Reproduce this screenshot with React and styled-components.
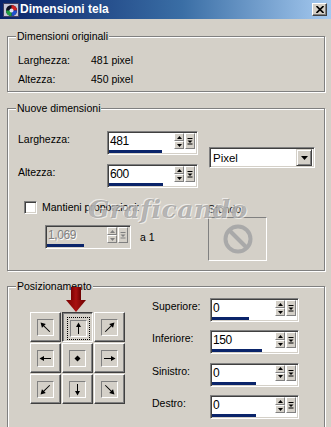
import React from 'react';
import styled, { createGlobalStyle } from 'styled-components';

const Global = createGlobalStyle`
  html, body { margin: 0; padding: 0; background: #d4d0c8; }
  body {
    font-family: "Liberation Sans", Arial, sans-serif;
    font-size: 10.5px;
    color: #000;
  }
`;

const Window = styled.div`
  position: relative;
  width: 331px;
  height: 427px;
  overflow: hidden;
  background: #d4d0c8;
`;

const TitleBar = styled.div`
  height: 19px;
  display: flex;
  align-items: center;
  padding: 0 4px 0 3px;
  background: linear-gradient(to right, #0a246a 0%, #3a6ea5 55%, #a6caf0 100%);
`;

const TitleText = styled.span`
  margin-left: 1px;
  color: #fff;
  font-weight: bold;
  font-size: 12px;
  line-height: 19px;
`;

const CloseButton = styled.div`
  margin-left: auto;
  width: 15px;
  height: 13px;
  box-sizing: border-box;
  background: #d4d0c8;
  border: 1px solid;
  border-color: #fff #404040 #404040 #fff;
  box-shadow: inset -1px -1px 0 #808080;
  display: flex;
  align-items: center;
  justify-content: center;
`;

const Body = styled.div`
  padding: 11px 0 0 7px;
`;

const Group = styled.fieldset`
  width: 318px;
  box-sizing: border-box;
  margin: ${p => p.$mt || 0}px 0 0;
  padding: 0;
  min-width: 0;
  border: 1px solid #808080;
  box-shadow: inset 1px 1px 0 #fff, 1px 1px 0 #fff;
`;

const Legend = styled.legend`
  margin-left: 8px;
  padding: 0 1px;
  line-height: 12px;
  background: #d4d0c8;
`;

const InfoContent = styled.div`
  padding: 8.5px 0 2.5px 10px;
`;

const InfoRow = styled.div`
  display: grid;
  grid-template-columns: 73px auto;
  line-height: 19px;
`;

const NewContent = styled.div`
  padding: 17px 0 9px 10px;
`;

const TopArea = styled.div`
  display: flex;
  align-items: center;
`;

const SizeGrid = styled.div`
  display: grid;
  grid-template-columns: 89px 91px;
  row-gap: 9px;
`;

const FieldLabel = styled.span`
  align-self: start;
  padding-top: 2px;
  line-height: 13px;
`;

const LowerArea = styled.div`
  display: flex;
  margin-top: 13px;
`;

const LeftCol = styled.div`
  width: 190px;
`;

const CheckRow = styled.div`
  display: flex;
  align-items: center;
  gap: 5px;
  padding-left: 6px;
  height: 13px;
  line-height: 13px;
`;

const CheckBox = styled.div`
  width: 13px;
  height: 13px;
  box-sizing: border-box;
  background: #fff;
  border: 1px solid;
  border-color: #808080 #fff #fff #808080;
  box-shadow: inset 1px 1px 0 #404040, inset -1px -1px 0 #d4d0c8;
`;

const RatioRow = styled.div`
  display: flex;
  align-items: center;
  gap: 9px;
  margin-top: 11px;
  padding-left: 27px;
`;

const RightCol = styled.div`
  display: flex;
  flex-direction: column;
  padding-top: 1.5px;
`;

const PlainLabel = styled.span`
  line-height: 13px;
`;

const SfondoBox = styled.div`
  margin-top: 1.5px;
  width: 59px;
  height: 44px;
  box-sizing: border-box;
  border: 1px solid;
  border-color: #808080 #fff #fff #808080;
  display: flex;
  align-items: center;
  justify-content: center;
`;

const PosContent = styled.div`
  display: flex;
  padding: 0 0 0 22px;
  height: 140px;
`;

const PosGrid = styled.div`
  display: grid;
  grid-template-columns: repeat(3, 31px);
  grid-auto-rows: 30px;
  gap: 1px;
  padding-top: 20px;
  align-self: start;
`;

const PosButton = styled.div`
  box-sizing: border-box;
  background: #d4d0c8;
  border: 1px solid;
  border-color: ${p => (p.$pressed ? '#404040 #fff #fff #404040' : '#fff #404040 #404040 #fff')};
  box-shadow: ${p => (p.$pressed ? 'inset 1px 1px 0 #808080' : 'inset -1px -1px 0 #808080')};
  display: flex;
  align-items: center;
  justify-content: center;
`;

const PosInner = styled.div`
  width: 17px;
  height: 17px;
  box-sizing: border-box;
  border: 1px solid;
  border-color: #808080 #fff #fff #808080;
  display: flex;
  align-items: center;
  justify-content: center;
  outline: ${p => (p.$pressed ? '1px dotted #000' : 'none')};
  outline-offset: 2px;
  transform: ${p => (p.$pressed ? 'translate(1px, 1px)' : 'none')};
`;

const MarginCol = styled.div`
  display: grid;
  grid-template-columns: 58px 89px;
  row-gap: 8.4px;
  margin-left: 27px;
  padding-top: 6px;
  align-self: start;
`;

/* Spin box */
const SpinFrame = styled.div`
  width: ${p => p.$w}px;
  height: 24px;
  box-sizing: border-box;
  border: 1px solid;
  border-color: #808080 #fff #fff #808080;
  box-shadow: inset 1px 1px 0 #404040, inset -1px -1px 0 #d4d0c8;
  background: ${p => (p.$disabled ? '#d4d0c8' : '#fff')};
  padding: 1px;
  display: flex;
  flex-direction: column;
`;

const SpinTop = styled.div`
  display: flex;
  height: 16px;
`;

const SpinValue = styled.span`
  flex: 1;
  padding-left: 1px;
  font-size: 12px;
  letter-spacing: -0.4px;
  line-height: 17px;
  color: ${p => (p.$disabled ? '#808080' : '#000')};
  text-shadow: ${p => (p.$disabled ? '1px 1px 0 #fff' : 'none')};
`;

const SpinButtons = styled.div`
  width: 10px;
  display: flex;
  flex-direction: column;
`;

const SmallBtn = styled.div`
  flex: 1;
  box-sizing: border-box;
  background: #d4d0c8;
  border: 1px solid;
  border-color: #fff #808080 #808080 #fff;
  display: flex;
  align-items: center;
  justify-content: center;
`;

const PresetBtn = styled(SmallBtn)`
  flex: none;
  width: 10px;
  margin: 0 1px 0 1px;
`;

const BarTrack = styled.div`
  height: 3px;
  margin-top: 1px;
`;

const BarFill = styled.div`
  height: 3px;
  background: #0a246a;
`;

/* Select */
const Select = styled.div`
  width: 106px;
  height: 21px;
  box-sizing: border-box;
  margin-left: 11px;
  margin-bottom: 4px;
  border: 1px solid;
  border-color: #808080 #fff #fff #808080;
  box-shadow: inset 1px 1px 0 #404040, inset -1px -1px 0 #d4d0c8;
  background: #fff;
  padding: 2px;
  display: flex;
  align-items: center;
`;

const SelectText = styled.span`
  flex: 1;
  padding-left: 1px;
  font-size: 11.5px;
`;

const SelectArrow = styled.div`
  width: 16px;
  height: 17px;
  box-sizing: border-box;
  background: #d4d0c8;
  border: 1px solid;
  border-color: #d4d0c8 #404040 #404040 #d4d0c8;
  box-shadow: inset 1px 1px 0 #fff, inset -1px -1px 0 #808080;
  display: flex;
  align-items: center;
  justify-content: center;
`;

/* Overlays */
const RedArrow = styled.svg`
  position: absolute;
  left: 65px;
  top: 287px;
`;

const Watermark = styled.div`
  position: absolute;
  left: 88px;
  top: 195px;
  font-family: "DejaVu Serif", "Liberation Serif", serif;
  font-style: italic;
  font-weight: bold;
  font-size: 25px;
  letter-spacing: 0.5px;
  color: rgba(125, 125, 125, 0.55);
  text-shadow: -1px -1px 0 rgba(255,255,255,0.6), 1px 1px 0 rgba(255,255,255,0.6);
  pointer-events: none;
`;

const Tri = ({ up, color = '#000' }) => (
  <svg width="5" height="3" viewBox="0 0 5 3">
    <polygon points={up ? '2.5,0 5,3 0,3' : '0,0 5,0 2.5,3'} fill={color} />
  </svg>
);

const PresetIcon = ({ color = '#000' }) => (
  <svg width="6" height="8" viewBox="0 0 6 8">
    <rect x="0.5" y="1" width="5" height="1" fill={color} />
    <polygon points="0.5,3.5 5.5,3.5 3,6" fill={color} />
    <rect x="0.5" y="6.5" width="5" height="1" fill={color} />
  </svg>
);

const SpinBox = ({ value, w = 91, bar, disabled }) => {
  const c = disabled ? '#808080' : '#000';
  return (
    <SpinFrame $w={w} $disabled={disabled}>
      <SpinTop>
        <SpinValue $disabled={disabled}>{value}</SpinValue>
        <SpinButtons>
          <SmallBtn><Tri up color={c} /></SmallBtn>
          <SmallBtn><Tri color={c} /></SmallBtn>
        </SpinButtons>
        <PresetBtn><PresetIcon color={c} /></PresetBtn>
      </SpinTop>
      <BarTrack>
        <BarFill style={{ width: bar }} />
      </BarTrack>
    </SpinFrame>
  );
};

const angles = { nw: -45, n: 0, ne: 45, w: -90, e: 90, sw: -135, s: 180, se: 135 };

const DirArrow = ({ dir }) => (
  <svg width="13" height="13" viewBox="0 0 13 13">
    {dir === 'c' ? (
      <polygon points="6.5,3.5 9.5,6.5 6.5,9.5 3.5,6.5" fill="#000" />
    ) : (
      <g transform={`rotate(${angles[dir]} 6.5 6.5)`}>
        <rect x="6" y="3" width="1" height={dir.length === 2 ? 9.5 : 9} fill="#000" />
        <polygon points={dir.length === 2 ? '6.5,-0.5 3.8,4.2 9.2,4.2' : '6.5,0.5 4,5 9,5'} fill="#000" />
      </g>
    )}
  </svg>
);

const TitleIcon = () => (
  <svg width="16" height="16" viewBox="0 0 16 16">
    <rect x="0.5" y="1.5" width="15" height="13" fill="#c8c8d8" stroke="#404060" />
    <circle cx="8.5" cy="8.5" r="5.5" fill="#101020" />
    <path d="M8.5 3 A5.5 5.5 0 0 1 14 8.5 L8.5 8.5 Z" fill="#d02020" />
    <path d="M14 8.5 A5.5 5.5 0 0 1 8.5 14 L8.5 8.5 Z" fill="#2050d0" />
    <path d="M8.5 14 A5.5 5.5 0 0 1 3 8.5 L8.5 8.5 Z" fill="#20a040" />
    <circle cx="8.5" cy="8.5" r="2" fill="#e0e0f0" />
  </svg>
);

const grid = ['nw', 'n', 'ne', 'w', 'c', 'e', 'sw', 's', 'se'];

const margins = [
  { label: 'Superiore:', value: '0', bar: 37 },
  { label: 'Inferiore:', value: '150', bar: 50 },
  { label: 'Sinistro:', value: '0', bar: 44 },
  { label: 'Destro:', value: '0', bar: 44 },
];

export default function App() {
  return (
    <>
      <Global />
      <Window>
        <TitleBar>
          <TitleIcon />
          <TitleText>Dimensioni tela</TitleText>
          <CloseButton>
            <svg width="8" height="7" viewBox="0 0 8 7">
              <path d="M0.5 0 L7.5 7 M7.5 0 L0.5 7" stroke="#000" strokeWidth="1.6" />
            </svg>
          </CloseButton>
        </TitleBar>
        <Body>
          <Group>
            <Legend>Dimensioni originali</Legend>
            <InfoContent>
              <InfoRow><span>Larghezza:</span><span>481 pixel</span></InfoRow>
              <InfoRow><span>Altezza:</span><span>450 pixel</span></InfoRow>
            </InfoContent>
          </Group>

          <Group $mt={10}>
            <Legend>Nuove dimensioni</Legend>
            <NewContent>
              <TopArea>
                <SizeGrid>
                  <FieldLabel>Larghezza:</FieldLabel>
                  <SpinBox value="481" bar={53} />
                  <FieldLabel>Altezza:</FieldLabel>
                  <SpinBox value="600" bar={54} />
                </SizeGrid>
                <Select>
                  <SelectText>Pixel</SelectText>
                  <SelectArrow>
                    <svg width="7" height="4" viewBox="0 0 7 4">
                      <polygon points="0,0 7,0 3.5,4" fill="#000" />
                    </svg>
                  </SelectArrow>
                </Select>
              </TopArea>
              <LowerArea>
                <LeftCol>
                  <CheckRow>
                    <CheckBox />
                    <span>Mantieni proporzioni:</span>
                  </CheckRow>
                  <RatioRow>
                    <SpinBox value="1,069" w={86} bar={37} disabled />
                    <span>a 1</span>
                  </RatioRow>
                </LeftCol>
                <RightCol>
                  <PlainLabel>Sfondo:</PlainLabel>
                  <SfondoBox>
                    <svg width="32" height="32" viewBox="0 0 32 32">
                      <circle cx="16" cy="16" r="12.5" fill="none" stroke="#a9a9a9" strokeWidth="4" />
                      <line x1="7.5" y1="7.5" x2="24.5" y2="24.5" stroke="#a9a9a9" strokeWidth="4" />
                    </svg>
                  </SfondoBox>
                </RightCol>
              </LowerArea>
            </NewContent>
          </Group>

          <Group $mt={9}>
            <Legend>Posizionamento</Legend>
            <PosContent>
              <PosGrid>
                {grid.map(d => (
                  <PosButton key={d} $pressed={d === 'n'}>
                    <PosInner $pressed={d === 'n'}>
                      <DirArrow dir={d} />
                    </PosInner>
                  </PosButton>
                ))}
              </PosGrid>
              <MarginCol>
                {margins.map(m => (
                  <React.Fragment key={m.label}>
                    <FieldLabel>{m.label}</FieldLabel>
                    <SpinBox value={m.value} w={89} bar={m.bar} />
                  </React.Fragment>
                ))}
              </MarginCol>
            </PosContent>
          </Group>
        </Body>

        <Watermark>Graficando</Watermark>
        <RedArrow width="22" height="26" viewBox="0 0 22 26">
          <defs>
            <linearGradient id="rg" x1="0" x2="1">
              <stop offset="0" stopColor="#7a0000" />
              <stop offset="0.5" stopColor="#a81010" />
              <stop offset="1" stopColor="#6a0000" />
            </linearGradient>
          </defs>
          <rect x="6" y="0" width="10" height="13" fill="url(#rg)" />
          <polygon points="1,13 21,13 11,25" fill="url(#rg)" />
        </RedArrow>
      </Window>
    </>
  );
}
